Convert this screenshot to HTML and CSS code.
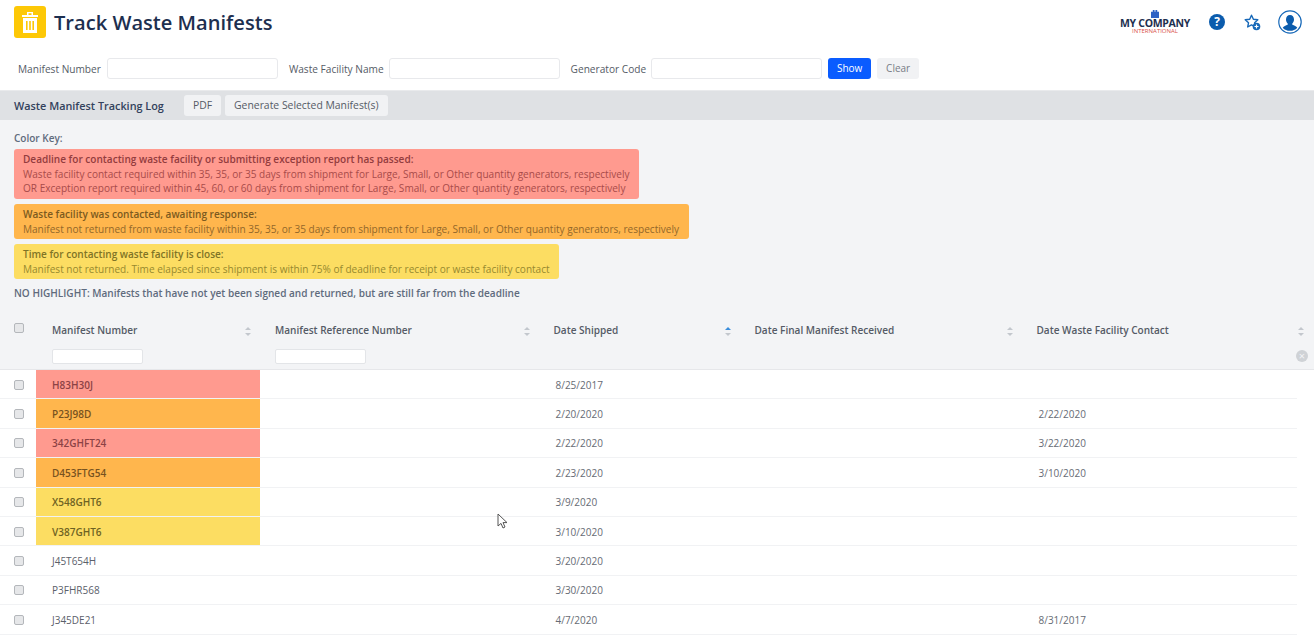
FILE: index.html
```html
<!DOCTYPE html>
<html lang="en">
<head>
<meta charset="utf-8">
<title>Track Waste Manifests</title>
<link rel="stylesheet" href="styles.css">
</head>
<body>
<header class="top">
  <div class="brand">
    <span class="app-icon">
      <svg width="16" height="21" viewBox="0 0 16 21"><path fill="#fff" d="M5 0h6v3h5v2H0V3h5zM6.500 1.200v1.800h3V1.200zM1 6h14v15H1z"/><path fill="#fdc806" d="M4 9h1.600v9H4zM7.200 9h1.600v9H7.200zM10.400 9H12v9h-1.600z"/></svg>
    </span>
    <h1>Track Waste Manifests</h1>
  </div>
  <div class="tools">
    <div class="logo">
      <svg class="logo-mark" width="8" height="8" viewBox="0 0 9 9"><path fill="#2f62c4" d="M0 2h9v7H0zM2 0h2v2H2zM5 0h2v2H5z"/></svg>
      <span class="logo-name">MY COMPANY</span>
      <span class="logo-sub">INTERNATIONAL</span>
    </div>
    <svg class="help" width="16" height="16" viewBox="0 0 16 16"><circle cx="8" cy="8" r="8" fill="#0b5cad"/><text x="8" y="12.200" text-anchor="middle" class="help-q">?</text></svg>
    <svg class="fav" width="17" height="17" viewBox="0 0 17 17"><path fill="none" stroke="#1668b8" stroke-width="1.400" stroke-linejoin="round" d="M7.500 1.200l1.900 4.100 4.400.5-3.200 3 .8 4.200-3.900-2.100-3.800 2.100.8-4.200-3.300-3 4.500-.5z"/><circle cx="12.500" cy="12.500" r="3.800" fill="#1668b8"/><path stroke="#fff" stroke-width="1.200" d="M10.500 12.500h4M12.500 10.500v4"/></svg>
    <svg class="user" width="24" height="24" viewBox="0 0 24 24"><circle cx="12" cy="12" r="11.200" fill="#fff" stroke="#1668b8" stroke-width="1.200"/><path fill="#0b5cad" d="M12 5c2.500 0 4 1.900 4 4.400 0 1.700-.7 3.200-1.700 4.100v1.200c2 .7 4 1.500 5 3a10 10 0 0 1-14.600 0c1-1.500 3-2.300 5-3v-1.200C8.700 12.600 8 11.100 8 9.400 8 6.900 9.500 5 12 5z"/></svg>
  </div>
</header>

<form class="filters">
  <label class="f-label f-first">Manifest Number</label><input class="f-input" type="text">
  <label class="f-label f-next">Waste Facility Name</label><input class="f-input" type="text">
  <label class="f-label f-next">Generator Code</label><input class="f-input" type="text">
  <button class="btn btn-primary" type="button">Show</button>
  <button class="btn btn-light" type="button">Clear</button>
</form>

<div class="bar">
  <span class="bar-title">Waste Manifest Tracking Log</span>
  <button class="btn btn-bar" type="button">PDF</button>
  <button class="btn btn-bar" type="button">Generate Selected Manifest(s)</button>
</div>

<section class="panel">
  <p class="key-title">Color Key:</p>
  <div class="key key-red">
    <strong>Deadline for contacting waste facility or submitting exception report has passed:</strong>
    <span>Waste facility contact required within 35, 35, or 35 days from shipment for Large, Small, or Other quantity generators, respectively</span>
    <span>OR Exception report required within 45, 60, or 60 days from shipment for Large, Small, or Other quantity generators, respectively</span>
  </div>
  <div class="key key-orange">
    <strong>Waste facility was contacted, awaiting response:</strong>
    <span>Manifest not returned from waste facility within 35, 35, or 35 days from shipment for Large, Small, or Other quantity generators, respectively</span>
  </div>
  <div class="key key-yellow">
    <strong>Time for contacting waste facility is close:</strong>
    <span>Manifest not returned. Time elapsed since shipment is within 75% of deadline for receipt or waste facility contact</span>
  </div>
  <p class="key-none">NO HIGHLIGHT: Manifests that have not yet been signed and returned, but are still far from the deadline</p>

  <div class="thead">
    <div class="th-row">
      <div class="cell-check"><span class="check"></span></div>
      <div class="th">Manifest Number<span class="sort"></span></div>
      <div class="th">Manifest Reference Number<span class="sort"></span></div>
      <div class="th">Date Shipped<span class="sort sort-active"></span></div>
      <div class="th">Date Final Manifest Received<span class="sort"></span></div>
      <div class="th">Date Waste Facility Contact<span class="sort"></span></div>
    </div>
    <div class="th-filter">
      <div></div>
      <div class="tf"><input class="mini" type="text"></div>
      <div class="tf"><input class="mini" type="text"></div>
      <div></div><div></div>
      <div class="tf-clear"><span class="clear-x">×</span></div>
    </div>
  </div>
</section>

<div class="tbody">
  <div class="row"><div class="cell-check"><span class="check"></span></div><div class="id hl-red">H83H30J</div><div></div><div class="date">8/25/2017</div><div></div><div class="date"></div></div>
  <div class="row"><div class="cell-check"><span class="check"></span></div><div class="id hl-orange">P23J98D</div><div></div><div class="date">2/20/2020</div><div></div><div class="date">2/22/2020</div></div>
  <div class="row"><div class="cell-check"><span class="check"></span></div><div class="id hl-red">342GHFT24</div><div></div><div class="date">2/22/2020</div><div></div><div class="date">3/22/2020</div></div>
  <div class="row"><div class="cell-check"><span class="check"></span></div><div class="id hl-orange">D453FTG54</div><div></div><div class="date">2/23/2020</div><div></div><div class="date">3/10/2020</div></div>
  <div class="row"><div class="cell-check"><span class="check"></span></div><div class="id hl-yellow">X548GHT6</div><div></div><div class="date">3/9/2020</div><div></div><div class="date"></div></div>
  <div class="row"><div class="cell-check"><span class="check"></span></div><div class="id hl-yellow">V387GHT6</div><div></div><div class="date">3/10/2020</div><div></div><div class="date"></div></div>
  <div class="row"><div class="cell-check"><span class="check"></span></div><div class="id">J45T654H</div><div></div><div class="date">3/20/2020</div><div></div><div class="date"></div></div>
  <div class="row"><div class="cell-check"><span class="check"></span></div><div class="id">P3FHR568</div><div></div><div class="date">3/30/2020</div><div></div><div class="date"></div></div>
  <div class="row"><div class="cell-check"><span class="check"></span></div><div class="id">J345DE21</div><div></div><div class="date">4/7/2020</div><div></div><div class="date">8/31/2017</div></div>
</div>

<svg class="cursor" width="12" height="17" viewBox="0 0 12 17"><path fill="#fff" stroke="#555" stroke-width="1" d="M1 1v12l3-2.600 2 4.600 2-1-2-4.400h4z"/></svg>
</body>
</html>
```

FILE: styles.css
```css
* { box-sizing: border-box; }
html, body { margin: 0; padding: 0; }
body {
  width: 1314px;
  height: 637px;
  overflow: hidden;
  position: relative;
  background: #fff;
  font-family: "Open Sans", "Liberation Sans", sans-serif;
  font-size: 10px;
  color: #555b66;
}
.top {
  height: 48px;
  display: flex;
  align-items: center;
  justify-content: space-between;
  padding: 0 12px 4px 14px;
}
.brand { display: flex; align-items: center; gap: 8px; }
.app-icon {
  width: 32px;
  height: 32px;
  border-radius: 3px;
  background: #fdc806;
  display: flex;
  align-items: center;
  justify-content: center;
}
h1 {
  margin: 0;
  font-size: 20.100px;
  font-weight: 600;
  color: #1d2f4f;
}
.tools { display: flex; align-items: center; }
.logo {
  width: 70px;
  display: flex;
  flex-direction: column;
  align-items: center;
  margin-right: 19px;
  line-height: 1;
}
.logo-mark { display: block; }
.logo-name { font-size: 10.500px; font-weight: 700; color: #1d2f4f; letter-spacing: -0.3px; white-space: nowrap; }
.logo-sub { font-size: 6px; color: #d9524a; }
.help { margin-right: 19px; }
.help-q { font-size: 12px; font-weight: 700; fill: #fff; font-family: "Open Sans", sans-serif; }
.fav { margin-right: 17px; }

.filters {
  height: 42px;
  display: flex;
  align-items: center;
  padding: 0 0 2px 18px;
}
.f-label { font-size: 10.150px; color: #555b66; margin-right: 5px; padding-top: 1px; }
.f-first { margin-right: 6px; }
.f-next { margin-left: 11px; }
.f-input {
  width: 171px;
  height: 21px;
  border: 1px solid #e8e9ec;
  border-radius: 3px;
  background: #fff;
  padding: 0;
}
.btn {
  font-family: inherit;
  font-size: 10px;
  height: 21px;
  border: 0;
  border-radius: 3px;
  padding: 0;
}
.btn-primary { width: 43px; margin-left: 6px; background: #0a5cff; color: #fff; }
.btn-light { width: 42px; margin-left: 6px; background: #f1f2f4; color: #777c85; }

.bar {
  height: 30px;
  background: #dfe1e4;
  border-top: 1px solid #e9eaec;
  display: flex;
  align-items: center;
  padding: 0 0 1px 14px;
}
.bar-title { font-size: 10.850px; font-weight: 600; color: #33415c; margin-right: 20px; }
.btn-bar { background: #f1f2f4; color: #555b66; padding: 0 9px; margin-right: 4px; height: 21px; font-size: 10.400px; }

.panel { background: #f3f4f6; height: 250px; border-bottom: 1px solid #e6e7ea; padding-top: 11px; }
.key-title { margin: 0 0 4px 14px; font-size: 10px; font-weight: 600; color: #5f6b7d; line-height: 14px; }
.key {
  display: flex;
  flex-direction: column;
  width: max-content;
  margin: 0 0 4.700px 14px;
  padding: 3px 9.500px 3px 9px;
  border-radius: 3px;
  font-size: 10.050px;
  line-height: 14.700px;
}
.key strong { font-weight: 600; }
.key-red { background: #ff9a8f; color: #a84b4a; }
.key-red strong { color: #933c3e; }
.key-orange { background: #ffb64d; color: #92672a; }
.key-orange strong { color: #7c5a20; }
.key-yellow { background: #fcdd62; color: #97892f; }
.key-yellow strong { color: #7f7426; }
.key-none { margin: 6.600px 0 0 14px; font-size: 10.050px; font-weight: 600; color: #5f6b7d; line-height: 14px; }

.thead { margin-top: 17px; }
.th-row, .th-filter, .row {
  display: grid;
  grid-template-columns: 36px 224px 278.500px 201px 282px 275.500px;
}
.th-row { height: 26px; align-items: center; width: 1314px; }
.th {
  position: relative;
  padding-left: 15px;
  padding-top: 1px;
  font-size: 10.050px;
  font-weight: 600;
  color: #555b66;
  height: 100%;
  display: flex;
  align-items: center;
}
.th:nth-child(2) { padding-left: 16px; }
.sort {
  position: absolute;
  right: 8px;
  top: 10px;
  width: 7px;
  height: 9px;
}
.sort::before, .sort::after {
  content: "";
  position: absolute;
  left: 0;
  border-left: 3.500px solid transparent;
  border-right: 3.500px solid transparent;
}
.sort::before { top: 0; border-bottom: 3.500px solid #c3c7cd; }
.sort::after { bottom: 0; border-top: 3.500px solid #c3c7cd; }
.sort-active::before { border-bottom-color: #3a8ddb; }
.th:last-of-type .sort { right: -8px; }
.th-filter { height: 23px; width: 1314px; grid-template-columns: 36px 224px 278.500px 201px 282px 292.500px; align-items: center; }
.tf { padding-left: 16px; padding-top: 5px; }
.tf:nth-child(3) { padding-left: 15px; }
.mini {
  display: block;
  width: 91px;
  height: 15px;
  border: 1px solid #e3e5e8;
  border-radius: 2px;
  background: #fff;
  padding: 0;
}
.tf-clear { display: flex; justify-content: flex-end; padding-right: 6px; padding-top: 3px; }
.clear-x {
  width: 12px;
  height: 12px;
  border-radius: 50%;
  background: #cfd2d6;
  color: #f3f4f6;
  font-size: 11px;
  line-height: 11px;
  text-align: center;
}
.cell-check { display: flex; align-items: center; padding-left: 14px; }
.th-row .cell-check { padding-bottom: 3px; }
.row .cell-check { padding-top: 1px; }
.check {
  display: block;
  width: 10px;
  height: 10px;
  background: #e6e7e9;
  border: 1px solid #b4b7bb;
  border-radius: 2px;
}

.tbody { width: 1297px; }
.row { height: 29.400px; border-bottom: 1.500px solid #f1f2f4; }
.id {
  display: flex;
  align-items: center;
  padding-left: 16px;
  padding-top: 1px;
  font-size: 10px;
  font-weight: 600;
  color: #5b606a;
}
.hl-red { background: #ff9a8f; color: #8c4245; }
.hl-orange { background: #ffb64d; color: #775220; }
.hl-yellow { background: #fcdd62; color: #6e6223; }
.row .id:not([class*="hl-"]) { font-weight: 400; }
.date { display: flex; align-items: center; padding-left: 17px; padding-top: 1px; font-size: 10px; color: #666b74; }

.cursor { position: absolute; left: 497px; top: 513px; }
```
